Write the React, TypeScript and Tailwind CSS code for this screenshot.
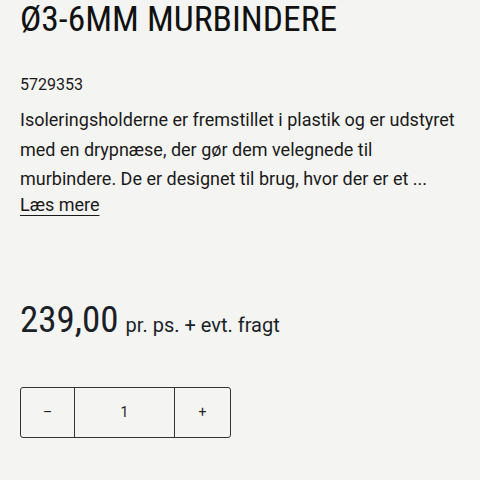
import React from "react";

export default function App() {
  return (
    <div className="w-[480px] h-[480px] overflow-hidden bg-[#f4f4f2] text-[#1a1a1a]" style={{ fontFamily: "Roboto, 'Noto Sans', sans-serif" }}>
      <div className="px-5">
        <h1 className="text-[35.5px] leading-[38px] font-normal text-[#111] whitespace-nowrap" style={{ fontFamily: "'Roboto Condensed', Roboto, sans-serif" }}>Ø3-6MM MURBINDERE</h1>
        <div className="mt-[36.5px] text-[16px] leading-[20px]">5729353</div>
        <p className="mt-[10.5px] text-[18px] leading-[29.5px] text-[#1a1a1a]">
          Isoleringsholderne er fremstillet i plastik og er udstyret med en drypnæse, der gør dem velegnede til murbindere. De er designet til brug, hvor der er et ...
        </p>
        <a className="block w-fit text-[18px] leading-[22px] underline underline-offset-[4px] decoration-1">Læs mere</a>
        <div className="mt-[82px] flex items-baseline gap-[7px] text-[#1b1f27]">
          <span className="text-[37px] leading-[44px]" style={{ fontFamily: "'Roboto Condensed', Roboto, sans-serif" }}>239,00</span>
          <span className="text-[20px] leading-[30px]">pr. ps. + evt. fragt</span>
        </div>
        <div className="mt-[45px] flex w-[211px] h-[51px] border-[1.5px] border-[#333] rounded-[3px] text-[14px] text-[#222]">
          <div className="w-[54px] flex items-center justify-center border-r-[1.5px] border-[#333]">–</div>
          <div className="w-[100px] flex items-center justify-center border-r-[1.5px] border-[#333]">1</div>
          <div className="flex-1 flex items-center justify-center">+</div>
        </div>
      </div>
    </div>
  );
}
